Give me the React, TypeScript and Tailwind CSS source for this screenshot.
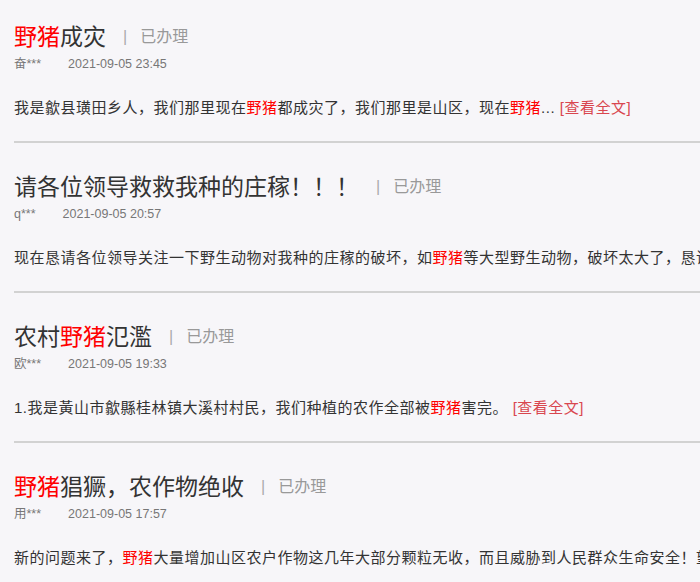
import React from "react";

type Part = { t: string; hl?: boolean };

interface Item {
  title: Part[];
  user: string;
  date: string;
  body: Part[];
  more?: string;
}

const items: Item[] = [
  {
    title: [{ t: "野猪", hl: true }, { t: "成灾" }],
    user: "奋***",
    date: "2021-09-05 23:45",
    body: [
      { t: "我是歙县璜田乡人，我们那里现在" },
      { t: "野猪", hl: true },
      { t: "都成灾了，我们那里是山区，现在" },
      { t: "野猪", hl: true },
      { t: "... " },
    ],
    more: "[查看全文]",
  },
  {
    title: [{ t: "请各位领导救救我种的庄稼！！！" }],
    user: "q***",
    date: "2021-09-05 20:57",
    body: [
      { t: "现在恳请各位领导关注一下野生动物对我种的庄稼的破坏，如" },
      { t: "野猪", hl: true },
      { t: "等大型野生动物，破坏太大了，恳请各位领导想想办法" },
    ],
  },
  {
    title: [{ t: "农村" }, { t: "野猪", hl: true }, { t: "氾濫" }],
    user: "欧***",
    date: "2021-09-05 19:33",
    body: [
      { t: "1.我是黃山市歙縣桂林镇大溪村村民，我们种植的农作全部被" },
      { t: "野猪", hl: true },
      { t: "害完。 " },
    ],
    more: "[查看全文]",
  },
  {
    title: [{ t: "野猪", hl: true }, { t: "猖獗，农作物绝收" }],
    user: "用***",
    date: "2021-09-05 17:57",
    body: [
      { t: "新的问题来了，" },
      { t: "野猪", hl: true },
      { t: "大量增加山区农户作物这几年大部分颗粒无收，而且威胁到人民群众生命安全！望领导重视" },
    ],
  },
];

function Parts({ parts }: { parts: Part[] }) {
  return (
    <>
      {parts.map((p, i) =>
        p.hl ? (
          <span key={i} className="text-[#ff0000]">
            {p.t}
          </span>
        ) : (
          <span key={i}>{p.t}</span>
        )
      )}
    </>
  );
}

export default function App() {
  return (
    <div
      className="w-[700px] h-[582px] overflow-hidden bg-[#f7f6f9] pt-[22px]"
      style={{ fontFamily: '"Liberation Sans", "Noto Sans CJK SC", sans-serif' }}
    >
      {items.map((it, idx) => (
        <div key={idx} className={idx === 0 ? "pl-[14px]" : "pl-[14px] pt-[29px]"}>
          <div className="flex items-center h-[30px] whitespace-nowrap">
            <span className="text-[23px] leading-[30px] text-[#333333]">
              <Parts parts={it.title} />
            </span>
            <span className="ml-[17px] text-[16px] text-[#aaaaaa]">|</span>
            <span className="ml-[13px] text-[16px] text-[#999999]">已办理</span>
          </div>
          <div className="mt-[2px] flex text-[12.5px] leading-[20px] text-[#777777] whitespace-nowrap">
            <span>{it.user}</span>
            <span className="ml-[27px]">{it.date}</span>
          </div>
          <div className="mt-[22px] text-[15px] tracking-[0.5px] leading-[24px] text-[#333333] whitespace-nowrap overflow-hidden">
            <Parts parts={it.body} />
            {it.more && <span className="text-[#d9464f]">{it.more}</span>}
          </div>
          {idx < items.length - 1 && (
            <div className="mt-[21px] h-[2px] bg-[#d2d2d2]" />
          )}
        </div>
      ))}
    </div>
  );
}
